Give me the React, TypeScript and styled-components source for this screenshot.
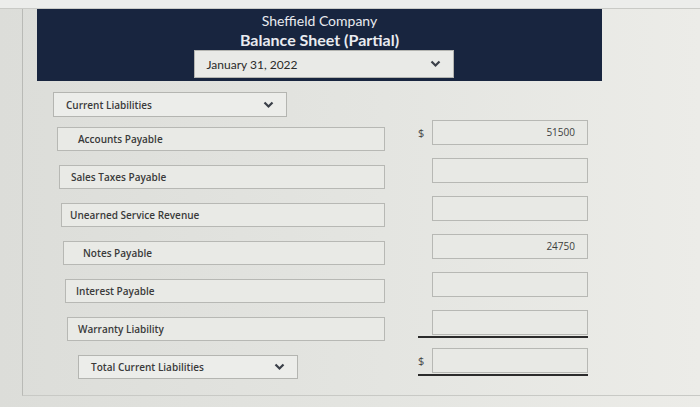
import React from "react";
import styled, { createGlobalStyle } from "styled-components";

const GlobalStyle = createGlobalStyle`
  html, body {
    margin: 0;
    padding: 0;
    background: #e2e3df;
    font-family: "Open Sans", "Liberation Sans", sans-serif;
  }
`;

const Page = styled.div`
  width: 700px;
  height: 407px;
  overflow: hidden;
  background: linear-gradient(90deg, #dcddd9 0%, #e4e5e1 55%, #ecece8 100%);
`;

const TopStrip = styled.div`
  height: 8px;
  background: #ecedeb;
  border-bottom: 1px solid #c9cac6;
`;

const Panel = styled.div`
  margin-left: 22px;
  border-left: 1px solid #b9bab6;
  height: 386px;
  border-bottom: 1px solid #c8c9c5;
`;

const Header = styled.div`
  margin-left: 14px;
  width: 565px;
  height: 72px;
  background: #18253f;
  display: flex;
  flex-direction: column;
  align-items: center;
  padding-top: 2px;
  box-sizing: border-box;
  font-family: Lato, "Liberation Sans", sans-serif;
  color: #e9ebf0;
`;

const Title = styled.div<{ $bold?: boolean }>`
  font-size: ${({ $bold }) => ($bold ? 16 : 14)}px;
  line-height: 19px;
  font-weight: ${({ $bold }) => ($bold ? 700 : 400)};
`;

const Select = styled.div<{ $width: number; $indent: number }>`
  width: ${({ $width }) => $width}px;
  height: 25px;
  box-sizing: border-box;
  background: #ecedea;
  border: 1px solid #b4b5b1;
  display: flex;
  align-items: center;
  justify-content: space-between;
  padding: 0 12px 0 ${({ $indent }) => $indent}px;
  font-size: 10px;
  font-weight: 600;
  color: #3a3a3a;
`;

const DateSelect = styled(Select)`
  margin-top: 1px;
  margin-left: 8px;
  height: 28px;
  background: #e9eae7;
  font-family: Lato, "Liberation Sans", sans-serif;
  font-size: 12px;
  font-weight: 400;
  color: #2a2a2a;
`;

const SectionSelect = styled(Select)`
  margin: 11px 0 0 30px;
`;

const Rows = styled.div`
  margin-top: 9px;
  display: flex;
  flex-direction: column;
  gap: 13px;
`;

const Row = styled.div`
  display: grid;
  grid-template-columns: 395px 170px;
  align-items: center;
  height: 25px;
`;

const LabelBox = styled.div<{ $indent: number; $offset: number }>`
  margin-left: ${({ $offset }) => $offset}px;
  width: ${({ $offset }) => 362 - $offset}px;
  height: 24px;
  box-sizing: border-box;
  border: 1px solid #b7b8b4;
  background: #e9eae6;
  display: flex;
  align-items: center;
  padding-left: ${({ $indent }) => $indent}px;
  font-size: 10px;
  font-weight: 600;
  color: #3a3a3a;
`;

const TotalSelect = styled(Select)`
  margin-left: 55px;
  height: 24px;
`;

const AmountCell = styled.div<{ $rule: boolean }>`
  margin-top: -10px;
  display: flex;
  align-items: center;
  padding-bottom: ${({ $rule }) => ($rule ? 1 : 3)}px;
  border-bottom: ${({ $rule }) => ($rule ? "2px solid #2b2b2b" : "none")};
`;

const Dollar = styled.div`
  width: 14px;
  font-size: 11px;
  color: #444;
`;

const AmountBox = styled.div`
  width: 156px;
  height: 25px;
  box-sizing: border-box;
  border: 1px solid #b7b8b4;
  background: #e8e9e5;
  display: flex;
  align-items: center;
  justify-content: flex-end;
  padding-right: 12px;
  font-size: 10px;
  color: #3d3d3d;
`;

const Chevron = () => (
  <svg width="11" height="8" viewBox="0 0 11 8">
    <path d="M1.5 1.5 L5.5 5.5 L9.5 1.5" fill="none" stroke="#3a3f48" strokeWidth="2.2" />
  </svg>
);

type Line = {
  label: string;
  indent: number;
  offset: number;
  amount?: string;
  dollar?: boolean;
  rule?: boolean;
};

const lines: Line[] = [
  { label: "Accounts Payable", indent: 20, offset: 34, amount: "51500", dollar: true },
  { label: "Sales Taxes Payable", indent: 11, offset: 36 },
  { label: "Unearned Service Revenue", indent: 8, offset: 38 },
  { label: "Notes Payable", indent: 19, offset: 40, amount: "24750" },
  { label: "Interest Payable", indent: 10, offset: 42 },
  { label: "Warranty Liability", indent: 10, offset: 44, rule: true },
];

export default function App() {
  return (
    <Page>
      <GlobalStyle />
      <TopStrip />
      <Panel>
        <Header>
          <Title>Sheffield Company</Title>
          <Title $bold>Balance Sheet (Partial)</Title>
          <DateSelect $width={260} $indent={12}>
            <span>January 31, 2022</span>
            <Chevron />
          </DateSelect>
        </Header>
        <SectionSelect $width={234} $indent={12}>
          <span>Current Liabilities</span>
          <Chevron />
        </SectionSelect>
        <Rows>
          {lines.map((l) => (
            <Row key={l.label}>
              <LabelBox $indent={l.indent} $offset={l.offset}>
                {l.label}
              </LabelBox>
              <AmountCell $rule={!!l.rule}>
                <Dollar>{l.dollar ? "$" : ""}</Dollar>
                <AmountBox>{l.amount ?? ""}</AmountBox>
              </AmountCell>
            </Row>
          ))}
          <Row>
            <TotalSelect $width={220} $indent={12}>
              <span>Total Current Liabilities</span>
              <Chevron />
            </TotalSelect>
            <AmountCell $rule>
              <Dollar>$</Dollar>
              <AmountBox />
            </AmountCell>
          </Row>
        </Rows>
      </Panel>
    </Page>
  );
}
